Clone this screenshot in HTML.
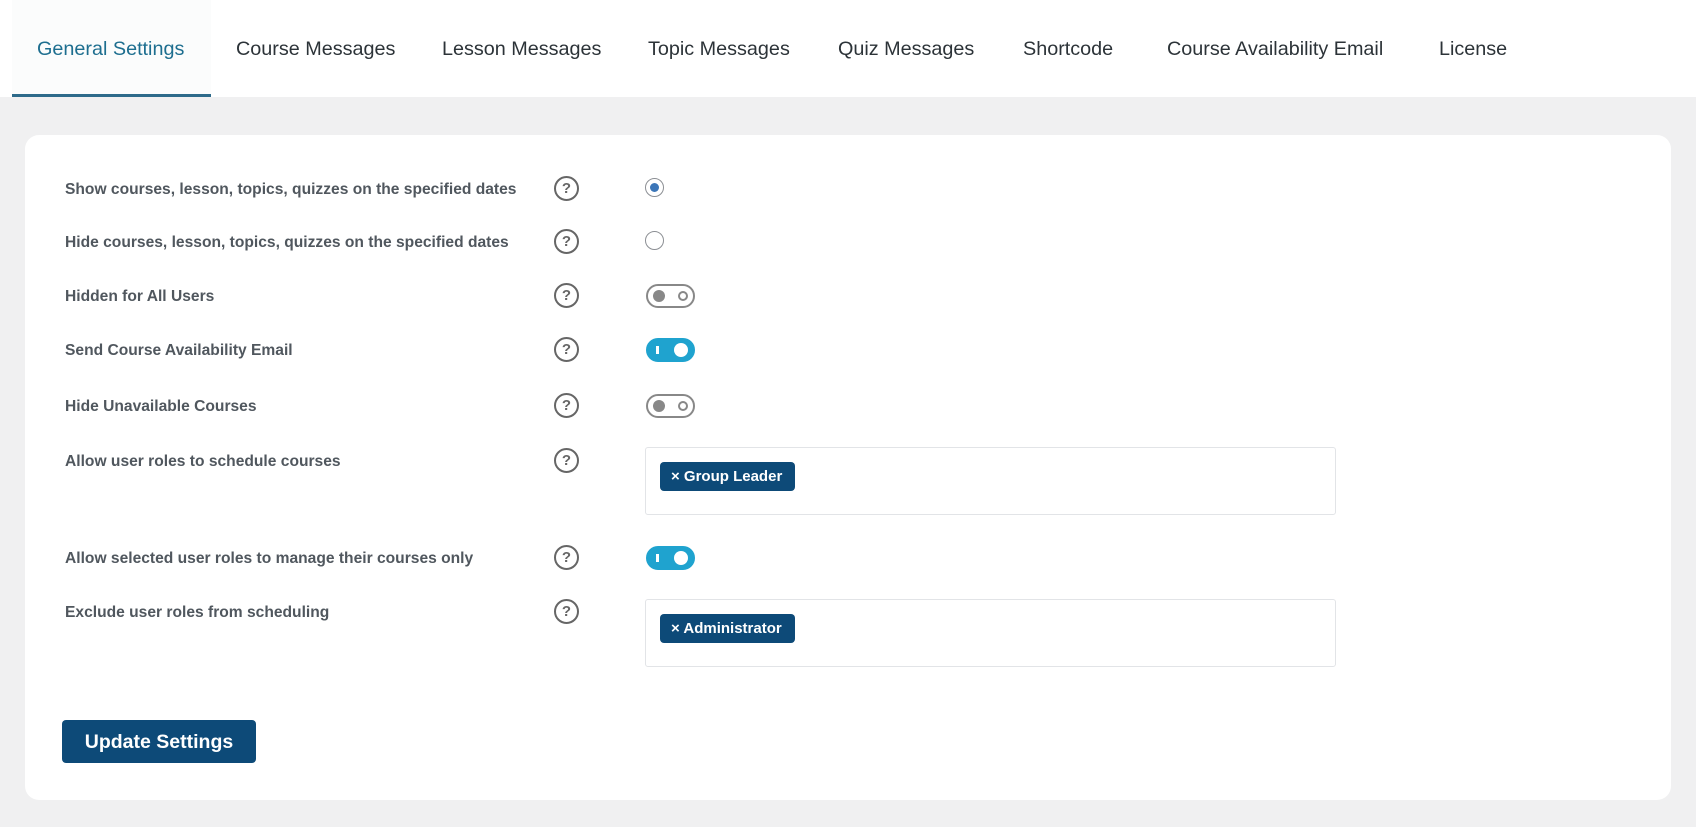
<!DOCTYPE html>
<html><head><meta charset="utf-8"><style>
*{box-sizing:border-box;margin:0;padding:0}
body{width:1696px;height:827px;background:#f0f0f1;font-family:"Liberation Sans",sans-serif;position:relative;overflow:hidden}
.tabs{position:absolute;left:0;top:0;width:1696px;height:97px;background:#fff}
.tab{position:absolute;top:38px;font-size:19.8px;color:#2c3338;white-space:nowrap}
.tab.act{color:#1d6e8f}
.act-bg{position:absolute;left:12px;top:0;width:199px;height:97px;background:#fbfcfc;border-bottom:3px solid #2d6a8a}
.card{position:absolute;left:25px;top:135px;width:1646px;height:665px;background:#fff;border-radius:14px}
.lbl{position:absolute;left:65px;font-size:15.6px;font-weight:bold;color:#50575e;white-space:nowrap;margin-top:2px}
.help{position:absolute;left:554px;width:25px;height:25px;border:2px solid #666;border-radius:50%;font-size:15px;font-weight:bold;color:#666;text-align:center;line-height:21px}
.radio{position:absolute;left:645px;width:19px;height:19px;border:1px solid #8c8f94;border-radius:50%}
.radio.on::after{content:"";position:absolute;left:4px;top:4px;width:9px;height:9px;border-radius:50%;background:#3c76b8}
.tg{position:absolute;left:646px;width:49px;height:24px;border:2px solid #888;border-radius:12px}
.tg .k{position:absolute;left:5px;top:4px;width:12px;height:12px;border-radius:50%;background:#888}
.tg .o{position:absolute;right:5px;top:5px;width:10px;height:10px;border-radius:50%;border:2px solid #888}
.tg.on{background:#1fa3cf;border-color:#1fa3cf}
.tg.on .k{left:auto;right:5px;top:3px;width:14px;height:14px;background:#fff}
.tg.on .bar{position:absolute;left:8px;top:6px;width:3px;height:8px;background:#fff}
.sel{position:absolute;left:645px;width:691px;height:68px;border:1px solid #e2e4e7;border-radius:3px}
.tag{position:absolute;left:14px;top:14px;height:29px;background:#0d4a78;border-radius:4px;color:#fff;font-weight:bold;font-size:15px;line-height:29px;padding:0 13px 0 11px;white-space:nowrap}
.btn{position:absolute;left:62px;top:720px;width:194px;height:43px;background:#0d4a78;border-radius:4px;color:#fff;font-size:19.5px;font-weight:bold;text-align:center;line-height:45px}
</style></head><body>
<div class="tabs">
<div class="act-bg"></div>
<div class="tab act" style="left:37px">General Settings</div>
<div class="tab" style="left:236px">Course Messages</div>
<div class="tab" style="left:442px">Lesson Messages</div>
<div class="tab" style="left:648px">Topic Messages</div>
<div class="tab" style="left:838px">Quiz Messages</div>
<div class="tab" style="left:1023px">Shortcode</div>
<div class="tab" style="left:1167px">Course Availability Email</div>
<div class="tab" style="left:1439px">License</div>
</div>
<div class="card"></div>

<div class="lbl" style="top:179px">Show courses, lesson, topics, quizzes on the specified dates</div>
<div class="help" style="top:176px">?</div>
<div class="radio on" style="top:178px"></div>

<div class="lbl" style="top:232px">Hide courses, lesson, topics, quizzes on the specified dates</div>
<div class="help" style="top:229px">?</div>
<div class="radio" style="top:231px"></div>

<div class="lbl" style="top:286px">Hidden for All Users</div>
<div class="help" style="top:283px">?</div>
<div class="tg" style="top:284px"><div class="k"></div><div class="o"></div></div>

<div class="lbl" style="top:340px">Send Course Availability Email</div>
<div class="help" style="top:337px">?</div>
<div class="tg on" style="top:338px"><div class="bar"></div><div class="k"></div></div>

<div class="lbl" style="top:396px">Hide Unavailable Courses</div>
<div class="help" style="top:393px">?</div>
<div class="tg" style="top:394px"><div class="k"></div><div class="o"></div></div>

<div class="lbl" style="top:451px">Allow user roles to schedule courses</div>
<div class="help" style="top:448px">?</div>
<div class="sel" style="top:447px"><div class="tag">× Group Leader</div></div>

<div class="lbl" style="top:548px">Allow selected user roles to manage their courses only</div>
<div class="help" style="top:545px">?</div>
<div class="tg on" style="top:546px"><div class="bar"></div><div class="k"></div></div>

<div class="lbl" style="top:602px">Exclude user roles from scheduling</div>
<div class="help" style="top:599px">?</div>
<div class="sel" style="top:599px"><div class="tag">× Administrator</div></div>

<div class="btn">Update Settings</div>
</body></html>
